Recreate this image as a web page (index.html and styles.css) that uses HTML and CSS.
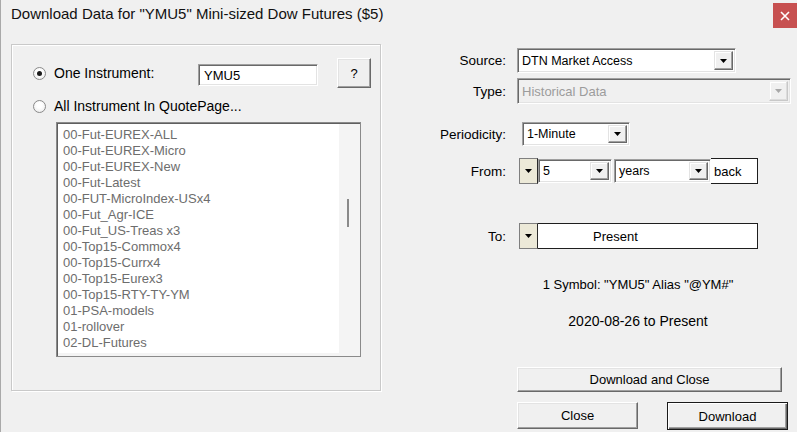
FILE: index.html
```html
<!DOCTYPE html>
<html>
<head>
<meta charset="utf-8">
<link rel="stylesheet" href="styles.css">
</head>
<body>
<div class="window">
  <div class="titlebar">
    <span class="title">Download Data for "YMU5" Mini-sized Dow Futures ($5)</span>
    <div class="close-x"><svg width="10" height="10" viewBox="0 0 10 10"><path d="M1 1 L9 9 M9 1 L1 9" stroke="#fff" stroke-width="1.6" fill="none"/></svg></div>
  </div>
  <div class="body">
    <div class="group">
      <div class="row-one">
        <div class="radio-label one"><span class="radio checked"></span>One Instrument:</div>
        <div class="textbox">YMU5</div>
        <div class="btn btn-q">?</div>
      </div>
      <div class="row-all">
        <div class="radio-label"><span class="radio"></span>All Instrument In QuotePage...</div>
      </div>
      <div class="listbox">
        <div class="list-items">
          <div class="item">00-Fut-EUREX-ALL</div>
          <div class="item">00-Fut-EUREX-Micro</div>
          <div class="item">00-Fut-EUREX-New</div>
          <div class="item">00-Fut-Latest</div>
          <div class="item">00-FUT-MicroIndex-USx4</div>
          <div class="item">00-Fut_Agr-ICE</div>
          <div class="item">00-Fut_US-Treas x3</div>
          <div class="item">00-Top15-Commox4</div>
          <div class="item">00-Top15-Currx4</div>
          <div class="item">00-Top15-Eurex3</div>
          <div class="item">00-Top15-RTY-TY-YM</div>
          <div class="item">01-PSA-models</div>
          <div class="item">01-rollover</div>
          <div class="item">02-DL-Futures</div>
        </div>
        <div class="list-scroll"><div class="thumb"></div></div>
      </div>
    </div>

    <div class="right">
      <div class="frow r-source">
        <div class="label">Source:</div>
        <div class="combo c-source">
          <div class="combo-text">DTN Market Access</div>
          <div class="drop"><svg width="7" height="4" viewBox="0 0 7 4"><polygon points="0,0 7,0 3.5,4" fill="#000"/></svg></div>
        </div>
      </div>
      <div class="frow r-type">
        <div class="label">Type:</div>
        <div class="combo c-type disabled">
          <div class="combo-text">Historical Data</div>
          <div class="drop"><svg width="7" height="4" viewBox="0 0 7 4"><polygon points="0,0 7,0 3.5,4" fill="#a8a8a8"/></svg></div>
        </div>
      </div>
      <div class="frow r-period">
        <div class="label">Periodicity:</div>
        <div class="combo c-period">
          <div class="combo-text">1-Minute</div>
          <div class="drop"><svg width="7" height="4" viewBox="0 0 7 4"><polygon points="0,0 7,0 3.5,4" fill="#000"/></svg></div>
        </div>
      </div>
      <div class="frow r-from">
        <div class="label">From:</div>
        <div class="beige"><svg width="7" height="4" viewBox="0 0 7 4"><polygon points="0,0 7,0 3.5,4" fill="#000"/></svg></div>
        <div class="combo c-num">
          <div class="combo-text">5</div>
          <div class="drop"><svg width="7" height="4" viewBox="0 0 7 4"><polygon points="0,0 7,0 3.5,4" fill="#000"/></svg></div>
        </div>
        <div class="combo c-unit">
          <div class="combo-text">years</div>
          <div class="drop"><svg width="7" height="4" viewBox="0 0 7 4"><polygon points="0,0 7,0 3.5,4" fill="#000"/></svg></div>
        </div>
        <div class="back">back</div>
      </div>
      <div class="frow r-to">
        <div class="label">To:</div>
        <div class="beige"><svg width="7" height="4" viewBox="0 0 7 4"><polygon points="0,0 7,0 3.5,4" fill="#000"/></svg></div>
        <div class="present">Present</div>
      </div>
      <div class="info symbol">1 Symbol: "YMU5" Alias "@YM#"</div>
      <div class="info date">2020-08-26 to Present</div>
      <div class="btn btn-dac">Download and Close</div>
      <div class="btn-row">
        <div class="btn btn-close">Close</div>
        <div class="btn btn-dl">Download</div>
      </div>
    </div>
  </div>
</div>
</body>
</html>
```

FILE: styles.css
```css
html, body {
  margin: 0;
  padding: 0;
  background: #f0f0f0;
}
.window {
  width: 797px;
  height: 432px;
  box-sizing: border-box;
  background: #f0f0f0;
  border-left: 1px solid #a9a9a9;
  font-family: "Liberation Sans", Arial, sans-serif;
  color: #000;
  overflow: hidden;
}
.titlebar {
  height: 30px;
  display: flex;
  justify-content: space-between;
  align-items: flex-start;
}
.title {
  font-size: 15px;
  line-height: 28px;
  padding-left: 10px;
  color: #111;
}
.close-x {
  width: 24px;
  height: 25px;
  margin-top: 3px;
  background: #c75050;
  display: flex;
  align-items: center;
  justify-content: center;
}
.body {
  display: flex;
  padding: 14px 0 0 10px;
}
.group {
  width: 370px;
  height: 347px;
  box-sizing: border-box;
  border: 1px solid #c9c9c9;
  box-shadow: inset 1px 1px 0 #fff, 1px 1px 0 #fff;
  padding: 13px 0 0 21px;
}
.row-one {
  display: flex;
  align-items: flex-start;
  height: 30px;
}
.radio-label {
  display: flex;
  align-items: center;
  font-size: 14px;
  height: 30px;
}
.radio-label.one {
  width: 165px;
}
.radio {
  width: 11px;
  height: 11px;
  border: 1px solid #8a8a8a;
  border-radius: 50%;
  background: radial-gradient(circle at 50% 40%, #fff 30%, #e6e6e6 100%);
  margin-right: 8px;
  position: relative;
  flex: none;
}
.radio.checked::after {
  content: "";
  position: absolute;
  left: 3px;
  top: 3px;
  width: 5px;
  height: 5px;
  border-radius: 50%;
  background: #1a1a1a;
}
.textbox {
  width: 120px;
  height: 22px;
  box-sizing: border-box;
  margin-top: 6px;
  background: #fff;
  border: 1px solid;
  border-color: #a0a0a0 #fff #fff #a0a0a0;
  box-shadow: inset 1px 1px 0 #696969, inset -1px -1px 0 #e3e3e3;
  font-size: 13px;
  line-height: 20px;
  padding: 1px 0 0 5px;
}
.btn {
  box-sizing: border-box;
  background: #f0f0f0;
  border: 1px solid;
  border-color: #fff #696969 #696969 #fff;
  box-shadow: inset -1px -1px 0 #a0a0a0, inset 1px 1px 0 #e3e3e3;
  font-size: 13px;
  display: flex;
  align-items: center;
  justify-content: center;
}
.btn-q {
  width: 34px;
  height: 30px;
  margin-left: 19px;
}
.row-all {
  margin-top: 8px;
}
.row-all .radio-label {
  height: 20px;
}
.listbox {
  margin: 6px 0 0 23px;
  width: 305px;
  height: 235px;
  box-sizing: border-box;
  border: 1px solid #8a8a8a;
  box-shadow: inset 1px 1px 0 #5f5f5f;
  background: #f4f4f4;
  display: flex;
  padding: 1px 0 0 1px;
}
.list-items {
  width: 281px;
  height: 229px;
  background: #fff;
  padding: 3px 0 0 5px;
  box-sizing: border-box;
  overflow: hidden;
}
.item {
  font-size: 13px;
  line-height: 16px;
  color: #6d6d6d;
  white-space: nowrap;
}
.list-scroll {
  flex: 1;
  position: relative;
}
.thumb {
  position: absolute;
  left: 8px;
  top: 75px;
  width: 2px;
  height: 28px;
  background: #8a8a8a;
}
.right {
  flex: 1;
  display: flex;
  flex-direction: column;
  padding-left: 1px;
}
.frow {
  display: flex;
  align-items: center;
}
.label {
  width: 124px;
  text-align: right;
  font-size: 13.5px;
  flex: none;
}
.combo {
  display: flex;
  box-sizing: border-box;
  background: #fff;
  border: 1px solid;
  border-color: #a0a0a0 #fff #fff #a0a0a0;
  box-shadow: inset 1px 1px 0 #696969, inset -1px -1px 0 #e3e3e3;
  padding: 2px;
}
.combo-text {
  flex: 1;
  display: flex;
  align-items: center;
  padding-left: 2px;
  font-size: 12.5px;
  white-space: nowrap;
}
.drop {
  width: 19px;
  box-sizing: border-box;
  background: #f0f0f0;
  border: 1px solid;
  border-color: #e3e3e3 #696969 #696969 #e3e3e3;
  box-shadow: inset -1px -1px 0 #a0a0a0, inset 1px 1px 0 #fff;
  display: flex;
  align-items: center;
  justify-content: center;
}
.r-source {
  margin-top: 4px;
  height: 25px;
}
.c-source {
  margin-left: 11px;
  width: 219px;
  height: 25px;
}
.r-type {
  margin-top: 5px;
  height: 26px;
}
.c-type {
  margin-left: 11px;
  width: 274px;
  height: 26px;
}
.combo.disabled {
  background: #f0f0f0;
}
.combo.disabled .combo-text {
  color: #9c9c9c;
  font-size: 13px;
}
.combo.disabled .drop {
  border-color: #f0f0f0 #c8c8c8 #c8c8c8 #f0f0f0;
  box-shadow: inset -1px -1px 0 #dcdcdc, inset 1px 1px 0 #fff;
}
.r-period {
  margin-top: 18px;
  height: 24px;
}
.c-period {
  margin-left: 16px;
  width: 108px;
  height: 24px;
}
.r-from {
  margin-top: 12px;
  height: 26px;
  align-items: stretch;
}
.r-from .label, .r-to .label {
  align-self: center;
}
.beige {
  margin-left: 13px;
  width: 19px;
  box-sizing: border-box;
  background: #ece9d8;
  border: 1px solid #7f7f7f;
  border-right-color: #2a2a2a;
  display: flex;
  align-items: center;
  justify-content: center;
}
.c-num {
  width: 74px;
  margin: 1px 0;
}
.c-unit {
  width: 97px;
  margin: 1px 0 1px 2px;
}
.back {
  width: 47px;
  box-sizing: border-box;
  background: #fff;
  border: 1px solid #1e1e1e;
  border-left: none;
  border-top-color: #1e1e1e;
  font-size: 13px;
  display: flex;
  align-items: center;
  padding-left: 3px;
}
.r-to {
  margin-top: 39px;
  height: 26px;
  align-items: stretch;
}
.present {
  width: 220px;
  box-sizing: border-box;
  background: #fff;
  border: 1px solid #1e1e1e;
  border-left: none;
  font-size: 13px;
  display: flex;
  align-items: center;
  padding-left: 55px;
}
.info {
  margin-left: 135px;
  width: 242px;
  text-align: center;
  line-height: 18px;
}
.symbol {
  margin-top: 27px;
  font-size: 13px;
}
.date {
  margin-top: 18px;
  font-size: 14px;
}
.btn-dac {
  margin: 37px 0 0 135px;
  width: 265px;
  height: 25px;
}
.btn-row {
  display: flex;
  margin: 10px 0 0 135px;
}
.btn-close {
  width: 121px;
  height: 27px;
}
.btn-dl {
  margin-left: 29px;
  width: 121px;
  height: 28px;
  border-color: #1a1a1a;
  box-shadow: inset 1px 1px 0 #fff, inset -1px -1px 0 #696969, inset -2px -2px 0 #a0a0a0;
}
```
